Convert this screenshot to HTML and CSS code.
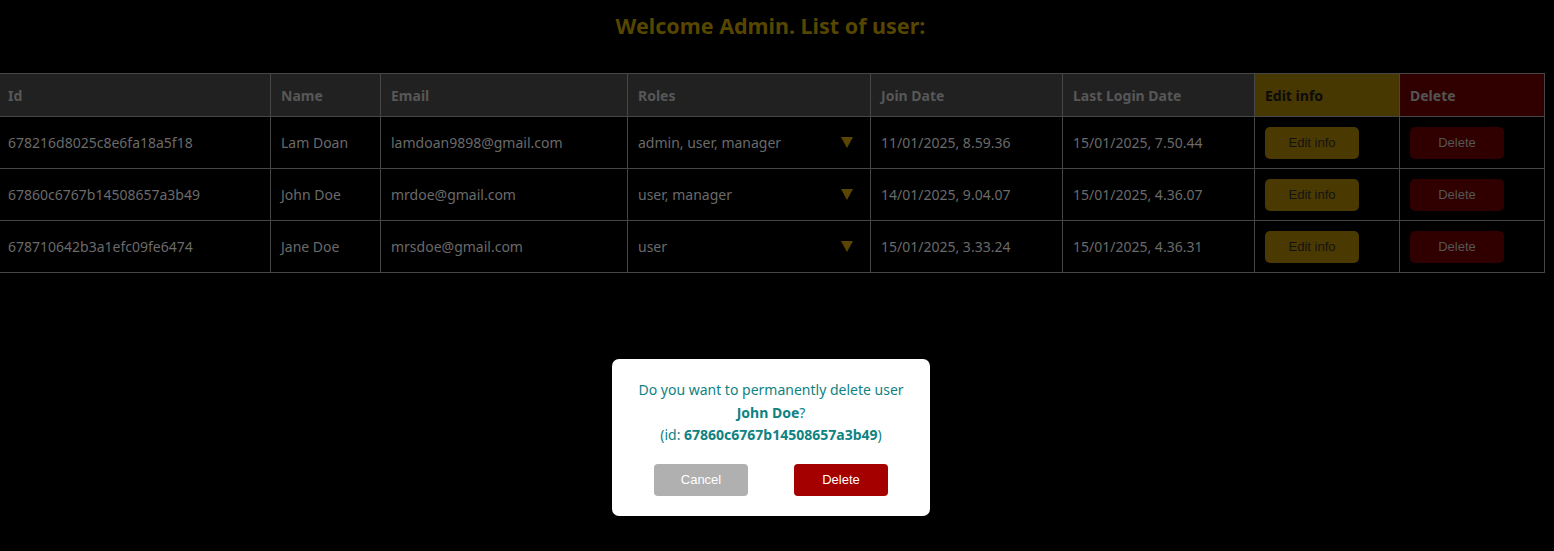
FILE: index.html
```html
<!DOCTYPE html>
<html>
<head>
<meta charset="utf-8">
<title>Users</title>
<link rel="stylesheet" href="styles.css">
</head>
<body>
<div class="page">
  <h2 class="title">Welcome Admin. List of user:</h2>
  <table class="users">
    <colgroup>
      <col style="width:273px"><col style="width:110px"><col style="width:247px"><col style="width:243px"><col style="width:192px"><col style="width:192px"><col style="width:145px"><col style="width:145px">
    </colgroup>
    <thead>
      <tr>
        <th>Id</th><th>Name</th><th>Email</th><th>Roles</th><th>Join Date</th><th>Last Login Date</th><th class="th-edit">Edit info</th><th class="th-del">Delete</th>
      </tr>
    </thead>
    <tbody>
      <tr>
        <td>678216d8025c8e6fa18a5f18</td><td>Lam Doan</td><td>lamdoan9898@gmail.com</td>
        <td><div class="roles"><span>admin, user, manager</span><span class="caret"></span></div></td>
        <td>11/01/2025, 8.59.36</td><td>15/01/2025, 7.50.44</td>
        <td><button class="btn-edit">Edit info</button></td><td><button class="btn-del">Delete</button></td>
      </tr>
      <tr>
        <td>67860c6767b14508657a3b49</td><td>John Doe</td><td>mrdoe@gmail.com</td>
        <td><div class="roles"><span>user, manager</span><span class="caret"></span></div></td>
        <td>14/01/2025, 9.04.07</td><td>15/01/2025, 4.36.07</td>
        <td><button class="btn-edit">Edit info</button></td><td><button class="btn-del">Delete</button></td>
      </tr>
      <tr>
        <td>678710642b3a1efc09fe6474</td><td>Jane Doe</td><td>mrsdoe@gmail.com</td>
        <td><div class="roles"><span>user</span><span class="caret"></span></div></td>
        <td>15/01/2025, 3.33.24</td><td>15/01/2025, 4.36.31</td>
        <td><button class="btn-edit">Edit info</button></td><td><button class="btn-del">Delete</button></td>
      </tr>
    </tbody>
  </table>
</div>
<div class="modal">
  <p class="msg">Do you want to permanently delete user<br><b>John Doe</b>?<br>(id: <b>67860c6767b14508657a3b49</b>)</p>
  <div class="actions">
    <button class="m-cancel">Cancel</button>
    <button class="m-delete">Delete</button>
  </div>
</div>
</body>
</html>
```
FILE: styles.css
```css
html, body {
  margin: 0;
  padding: 0;
  background: #000;
}
body {
  font-family: "Noto Sans", "Open Sans", sans-serif;
  font-size: 14px;
  position: relative;
  min-height: 551px;
}
.page {
  width: 1547px;
  margin-left: -3px;
}
.title {
  margin: 0;
  padding-top: 12px;
  height: 73px;
  box-sizing: border-box;
  text-align: center;
  font-size: 21.5px;
  font-weight: 700;
  color: #564600;
  line-height: 28px;
}
.users {
  border-collapse: collapse;
  table-layout: fixed;
  width: 1547px;
}
.users th, .users td {
  border: 1px solid #464646;
  padding: 0 10px;
  text-align: left;
  color: #6a6a6a;
  font-weight: 400;
  white-space: nowrap;
}
.users th {
  height: 42px;
  background: #212121;
  color: #575757;
  font-weight: 700;
}
.users td {
  height: 51px;
}
.users th.th-edit {
  background: #473700;
  color: #0c0c0c;
}
.users th.th-del {
  background: #300000;
  color: #545454;
}
.roles {
  display: flex;
  justify-content: space-between;
  align-items: center;
  padding-right: 7px;
}
.caret {
  width: 0;
  height: 0;
  border-left: 6px solid transparent;
  border-right: 6px solid transparent;
  border-top: 11px solid #5a4600;
}
.btn-edit, .btn-del {
  width: 94px;
  height: 32px;
  border: 0;
  border-radius: 5px;
  font-family: "Liberation Sans", Arial, sans-serif;
  font-size: 13px;
  display: block;
}
.btn-edit {
  background: #4a3900;
  color: #141414;
}
.btn-del {
  background: #300000;
  color: #555;
}
.modal {
  position: absolute;
  left: 612px;
  top: 359px;
  width: 318px;
  height: 157px;
  box-sizing: border-box;
  background: #fff;
  border-radius: 7px;
  padding-top: 20px;
  text-align: center;
}
.msg {
  margin: 0;
  color: #0f8282;
  font-size: 14px;
  line-height: 22.5px;
}
.msg b {
  font-weight: 700;
}
.actions {
  display: flex;
  justify-content: center;
  gap: 46px;
  margin-top: 17px;
}
.m-cancel, .m-delete {
  width: 94px;
  height: 32px;
  border: 0;
  border-radius: 4px;
  color: #fff;
  font-family: "Liberation Sans", Arial, sans-serif;
  font-size: 13px;
}
.m-cancel {
  background: #b0b0b0;
}
.m-delete {
  background: #a50000;
}
```
